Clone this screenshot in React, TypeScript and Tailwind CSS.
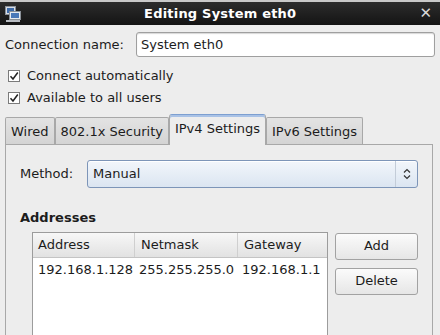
import React from "react";

function NetIcon() {
  return (
    <svg width="16" height="18" viewBox="0 0 16 18">
      <rect x="0.5" y="1.5" width="10" height="8" fill="#d8dde4" stroke="#8a9098" />
      <rect x="2" y="3" width="7" height="5" fill="#3d6aa8" />
      <rect x="4.5" y="6.5" width="11" height="8" fill="#e6e9ee" stroke="#8a9098" />
      <rect x="6" y="8" width="8" height="5" fill="#4a78b8" />
      <rect x="1" y="15" width="14" height="2" fill="#b8bcc2" />
    </svg>
  );
}

function Check() {
  return (
    <span className="flex h-[12px] w-[12px] items-center justify-center border border-[#7b7b7b] bg-white">
      <svg width="10" height="10" viewBox="0 0 10 10">
        <path d="M1.5 5.2 L4 8 L8.8 1.5" fill="none" stroke="#222" strokeWidth="1.5" />
      </svg>
    </span>
  );
}

function Tab({ label, active }: { label: string; active?: boolean }) {
  if (active) {
    return (
      <div className="relative z-10 -mb-px flex h-[31px] items-start rounded-t-[3px] border border-b-0 border-[#a8a8a8] border-t-[#7d9fd0] bg-[#ededed] px-[5px] pt-[4px] shadow-[inset_0_2px_0_#a9c2e6]">
        {label}
      </div>
    );
  }
  return (
    <div className="flex h-[27px] items-center rounded-t-[2px] border border-b-0 border-[#a8a8a8] bg-gradient-to-b from-[#e3e3e3] to-[#d4d4d4] px-[5px] pt-[2px]">
      {label}
    </div>
  );
}

function Button({ label }: { label: string }) {
  return (
    <div className="flex h-[27px] w-[83px] items-center justify-center rounded-[3px] border border-[#a2a2a2] bg-gradient-to-b from-[#fbfbfb] to-[#e6e6e6]">
      {label}
    </div>
  );
}

export default function App() {
  return (
    <div className="h-[335px] w-[440px] overflow-hidden bg-[#ededed] font-['DejaVu_Sans',sans-serif] text-[13px] text-[#1c1c1c]">
      <div className="h-[2px] bg-[#c9c9c9]" />
      <div className="flex h-[23px] items-center bg-gradient-to-b from-[#2d2d2d] to-[#141414] px-[5px]">
        <NetIcon />
        <div className="flex-1 text-center text-[13px] font-bold tracking-[0.2px] text-white">
          Editing System eth0
        </div>
        <span className="pr-[3px] text-[15px] font-bold text-[#d8d8d8]">✕</span>
      </div>

      <div className="px-[5px] pt-[7px]">
        <div className="flex items-center">
          <span className="w-[131px]">Connection name:</span>
          <div className="flex h-[25px] flex-1 items-center rounded-[3px] border border-[#9f9f9f] bg-white px-[4px] shadow-[inset_0_1px_1px_#d8d8d8]">
            System eth0
          </div>
        </div>

        <div className="mt-[11px] flex flex-col gap-[6px] pl-[3px]">
          <div className="flex h-[16px] items-center gap-[7px]">
            <Check />
            <span>Connect automatically</span>
          </div>
          <div className="flex h-[16px] items-center gap-[7px]">
            <Check />
            <span>Available to all users</span>
          </div>
        </div>

        <div className="mt-[8px] flex items-end">
          <Tab label="Wired" />
          <Tab label="802.1x Security" />
          <Tab label="IPv4 Settings" active />
          <Tab label="IPv6 Settings" />
        </div>

        <div className="mr-[2px] h-[200px] border border-[#a8a8a8] bg-[#ededed] px-[14px] pt-[15px]">
          <div className="flex items-center">
            <span className="w-[67px]">Method:</span>
            <div className="flex h-[28px] flex-1 items-center rounded-[3px] border border-[#7d95b8] bg-gradient-to-b from-[#f2f6fb] to-[#dbe5f1] shadow-[inset_0_1px_0_#ffffff]">
              <span className="flex-1 pl-[5px]">Manual</span>
              <div className="flex h-full w-[22px] items-center justify-center border-l border-[#c3ccd8]">
                <svg width="8" height="12" viewBox="0 0 8 12">
                  <path d="M1 4.5 L4 1.5 L7 4.5 M1 7.5 L4 10.5 L7 7.5" fill="none" stroke="#333" strokeWidth="1.2" />
                </svg>
              </div>
            </div>
          </div>

          <div className="mt-[20px] font-bold">Addresses</div>

          <div className="mt-[4px] flex gap-[7px] pl-[12px]">
            <div className="h-[120px] w-[296px] border border-[#9c9c9c] bg-white">
              <div className="flex h-[25px] border-b border-[#c4c4c4] bg-gradient-to-b from-[#f7f7f7] to-[#e2e2e2]">
                <div className="flex w-[102px] items-center border-r border-[#cfcfcf] pl-[5px]">Address</div>
                <div className="flex w-[103px] items-center border-r border-[#cfcfcf] pl-[6px]">Netmask</div>
                <div className="flex flex-1 items-center pl-[6px]">Gateway</div>
              </div>
              <div className="flex h-[24px] items-center">
                <div className="w-[102px] pl-[5px]">192.168.1.128</div>
                <div className="w-[103px] pl-[4px]">255.255.255.0</div>
                <div className="flex-1 pl-[4px]">192.168.1.1</div>
              </div>
            </div>
            <div className="flex flex-col gap-[8px] pt-px">
              <Button label="Add" />
              <Button label="Delete" />
            </div>
          </div>
        </div>
      </div>
    </div>
  );
}
